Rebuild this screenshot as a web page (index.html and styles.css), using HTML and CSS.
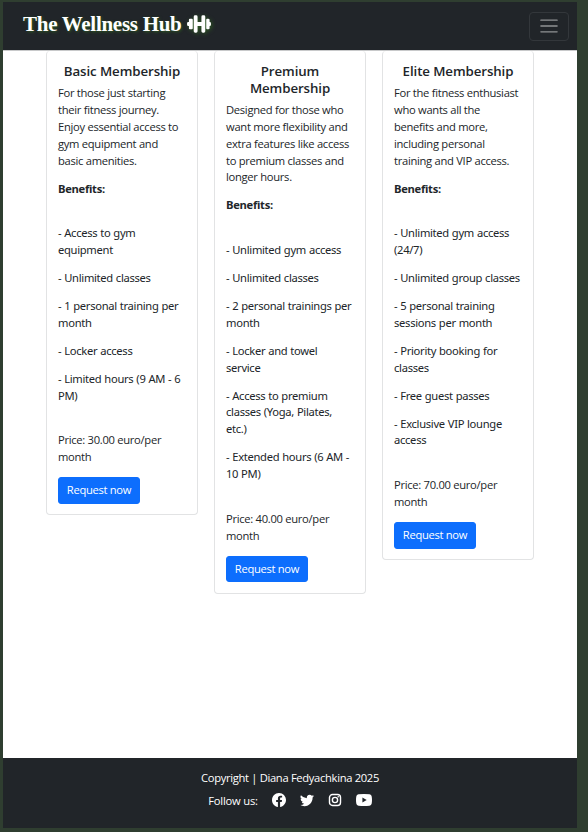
FILE: index.html
```html
<!DOCTYPE html>
<html lang="en">
<head>
<meta charset="utf-8">
<title>The Wellness Hub</title>
<link rel="stylesheet" href="styles.css">
</head>
<body>
<div class="page">
  <header class="navbar">
    <a class="brand"><span class="brand-name">The Wellness Hub</span>
      <svg class="dumbbell" viewBox="0 0 26 18"><path d="M1 7h1V4.500q0-1 1-1h2q1 0 1 1v9q0 1-1 1H3q-1 0-1-1V11H1q-1 0-1-2t1-2zM7 1.500Q7 0 8.500 0h1Q11 0 11 1.500V7h4V1.500Q15 0 16.500 0h1Q19 0 19 1.500v15q0 1.500-1.500 1.500h-1Q15 18 15 16.500V11h-4v5.500Q11 18 9.500 18h-1Q7 18 7 16.500zM20 4.500q0-1 1-1h1q1.500 0 1.500 1V7h.5q1 0 1 2t-1 2h-.5v2.500q0 1-1.500 1h-1q-1 0-1-1z"/></svg>
    </a>
    <button class="toggler" aria-label="Menu"><svg viewBox="0 0 30 30"><path d="M4 7h22M4 15h22M4 23h22"/></svg></button>
  </header>
  <main class="cards">
    <section class="card">
      <h5>Basic Membership</h5>
      <p>For those just starting<br>their fitness journey.<br>Enjoy essential access to<br>gym equipment and<br>basic amenities.</p>
      <p class="label">Benefits:</p>
      <ul>
        <li>- Access to gym<br>equipment</li>
        <li>- Unlimited classes</li>
        <li>- 1 personal training per<br>month</li>
        <li>- Locker access</li>
        <li>- Limited hours (9 AM - 6<br>PM)</li>
      </ul>
      <p>Price: 30.00 euro/per<br>month</p>
      <a class="btn">Request now</a>
    </section>
    <section class="card">
      <h5>Premium<br>Membership</h5>
      <p>Designed for those who<br>want more flexibility and<br>extra features like access<br>to premium classes and<br>longer hours.</p>
      <p class="label">Benefits:</p>
      <ul>
        <li>- Unlimited gym access</li>
        <li>- Unlimited classes</li>
        <li>- 2 personal trainings per<br>month</li>
        <li>- Locker and towel<br>service</li>
        <li>- Access to premium<br>classes (Yoga, Pilates,<br>etc.)</li>
        <li>- Extended hours (6 AM -<br>10 PM)</li>
      </ul>
      <p>Price: 40.00 euro/per<br>month</p>
      <a class="btn">Request now</a>
    </section>
    <section class="card">
      <h5>Elite Membership</h5>
      <p>For the fitness enthusiast<br>who wants all the<br>benefits and more,<br>including personal<br>training and VIP access.</p>
      <p class="label">Benefits:</p>
      <ul>
        <li>- Unlimited gym access<br>(24/7)</li>
        <li>- Unlimited group classes</li>
        <li>- 5 personal training<br>sessions per month</li>
        <li>- Priority booking for<br>classes</li>
        <li>- Free guest passes</li>
        <li>- Exclusive VIP lounge<br>access</li>
      </ul>
      <p>Price: 70.00 euro/per<br>month</p>
      <a class="btn">Request now</a>
    </section>
  </main>
  <footer class="footer">
    <div class="copyright">Copyright | Diana Fedyachkina 2025</div>
    <div class="social">
      <span class="follow">Follow us:</span>
      <svg viewBox="0 0 16 16"><path d="M16 8.049c0-4.446-3.582-8.050-8-8.050C3.580 0-.002 3.603-.002 8.050c0 4.017 2.926 7.347 6.750 7.951v-5.625h-2.030V8.050H6.750V6.275c0-2.017 1.195-3.131 3.022-3.131.876 0 1.791.157 1.791.157v1.980h-1.009c-.993 0-1.303.621-1.303 1.258v1.510h2.218l-.354 2.326H9.250V16c3.824-.604 6.750-3.934 6.750-7.951z"/></svg>
      <svg viewBox="0 0 16 16"><path d="M5.026 15c6.038 0 9.341-5.003 9.341-9.334 0-.14 0-.282-.006-.422A6.685 6.685 0 0 0 16 3.542a6.658 6.658 0 0 1-1.889.518 3.301 3.301 0 0 0 1.447-1.817 6.533 6.533 0 0 1-2.087.793A3.286 3.286 0 0 0 7.875 6.030a9.325 9.325 0 0 1-6.767-3.429 3.289 3.289 0 0 0 1.018 4.382A3.323 3.323 0 0 1 .64 6.575v.045a3.288 3.288 0 0 0 2.632 3.218 3.203 3.203 0 0 1-.865.115 3.230 3.230 0 0 1-.614-.057 3.283 3.283 0 0 0 3.067 2.277A6.588 6.588 0 0 1 .78 13.580a6.320 6.320 0 0 1-.78-.045A9.344 9.344 0 0 0 5.026 15z"/></svg>
      <svg class="insta" viewBox="0 0 16 16"><rect x="1.700" y="1.700" width="12.600" height="12.600" rx="3.500"/><circle cx="8" cy="8" r="3"/><circle class="dot" cx="11.700" cy="4.300" r=".9"/></svg>
      <svg class="tube" viewBox="0 0 16 12"><path fill-rule="evenodd" d="M2.500.3Q8-.3 13.500.3 15.500.5 15.700 2.500q.6 3.500 0 7-.3 2-2.200 2.200-5.500.6-11 0Q.6 11.500.3 9.500q-.6-3.500 0-7Q.5.5 2.500.3zM6.400 3.400v5.200L10.700 6z"/></svg>
    </div>
  </footer>
</div>
</body>
</html>
```
FILE: styles.css
```css
* { box-sizing: border-box; }
body {
  margin: 0;
  height: 832px;
  padding: 2px 11px 4px 3px;
  overflow: hidden;
  background: #2f3e30;
  color: #212529;
  font: 11.2px/16.8px "Open Sans", "Noto Sans", sans-serif;
}
.page { display: flex; flex-direction: column; height: 826px; background: #fff; }
.navbar {
  display: flex;
  align-items: center;
  justify-content: space-between;
  flex: none;
  height: 48px;
  padding: 0 8px 0 20px;
  background: #212529;
}
.brand {
  display: flex;
  align-items: center;
  gap: 5px;
  padding-bottom: 4px;
  color: #fff;
  font: 600 21px/26px "Liberation Serif", serif;
  text-shadow: 1px 1px 3px #2d5c20;
}
.brand-name { white-space: nowrap; letter-spacing: -.28px; }
.dumbbell { width: 25px; height: 18px; fill: #fff; filter: drop-shadow(1px 1px 2px #2d5c20); }
.toggler {
  display: grid;
  place-items: center;
  width: 40px;
  height: 29px;
  padding: 0;
  border: 1px solid #33373b;
  border-radius: 4px;
  background: none;
}
.toggler svg { width: 22px; height: 22px; fill: none; stroke: #909294; stroke-width: 2; stroke-linecap: round; }
.cards {
  display: flex;
  flex: 1;
  align-items: flex-start;
  gap: 16px;
  padding: 0 43px;
  border-top: 1px solid #c8c9ca;
}
.card {
  width: 152px;
  padding: 12px 11px 10.6px;
  border: 1px solid #e2e3e4;
  border-top: 0;
  border-radius: 4px;
  white-space: nowrap;
}
h5 { margin: 0 0 5.6px; font-size: 13.3px; line-height: 16.8px; font-weight: 600; letter-spacing: -.1px; text-align: center; }
p { margin: 0 0 11.2px; letter-spacing: -.29px; }
.label { font-weight: 700; }
ul { margin: 28px 0; padding: 0; list-style: none; font-family: "Noto Sans", sans-serif; }
li { margin-bottom: 11.2px; letter-spacing: -.3px; word-spacing: .3px; }
.btn {
  display: block;
  width: 82px;
  height: 26.600px;
  border: 1px solid #0d6efd;
  border-radius: 3px;
  background: #0d6efd;
  color: #fff;
  line-height: 24px;
  letter-spacing: -.3px;
  text-align: center;
}
.footer { flex: none; height: 70px; padding-top: 12px; background: #212529; color: #fff; }
.copyright { text-align: center; letter-spacing: -.32px; }
.social { display: flex; align-items: center; justify-content: center; gap: 14px; height: 17px; margin-top: 5px; }
.social svg { width: 14px; height: 14px; fill: #fff; }
.follow { letter-spacing: -.2px; padding-top: 2px; }
.social .insta { fill: none; stroke: #fff; stroke-width: 1.6; }
.insta .dot { fill: #fff; stroke: none; }
.social .tube { width: 16px; height: 12px; }
```
